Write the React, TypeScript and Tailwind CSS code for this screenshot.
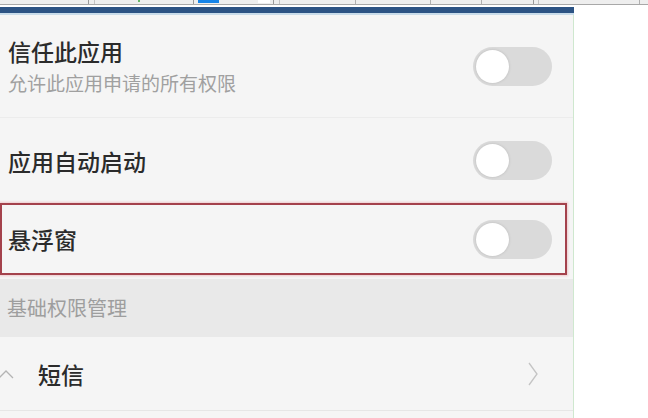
import React from "react";

const font = { fontFamily: '"Noto Sans CJK SC", "Noto Sans", sans-serif' };

function Toggle() {
  return (
    <div className="relative h-[39px] w-[79px] rounded-full bg-[#dadada]">
      <div className="absolute left-[3px] top-[3px] size-[33px] rounded-full bg-white shadow-[0_0_3px_rgba(0,0,0,0.15)]" />
    </div>
  );
}

export default function App() {
  return (
    <div className="h-[418px] w-[648px] overflow-hidden bg-white" style={font}>
      {/* cropped toolbar strip */}
      <div className="relative h-[5px] border-b border-[#a8a8a8] bg-[#eeeeee]">
        <div className="absolute left-[88px] top-0 h-[4px] w-px bg-[#9a9a9a]" />
        <div className="absolute left-[94px] top-0 h-[4px] w-px bg-[#c4c4c4]" />
        <div className="absolute left-[138px] top-0 size-[2px] rounded-full bg-[#3aa63a]" />
        <div className="absolute left-[193px] top-0 h-[4px] w-px bg-[#9a9a9a]" />
        <div className="absolute left-[198px] top-0 h-[3px] w-[21px] bg-[#1684e8]" />
        <div className="absolute left-[258px] top-0 h-[3px] w-[12px] bg-white" />
        <div className="absolute left-[273px] top-0 h-[4px] w-px bg-[#9a9a9a]" />
        <div className="absolute left-[279px] top-0 h-[4px] w-px bg-[#c4c4c4]" />
        <div className="absolute left-[355px] top-0 h-[4px] w-px bg-[#b0b0b0]" />
        <div className="absolute left-[430px] top-0 h-[4px] w-px bg-[#b0b0b0]" />
        <div className="absolute left-[481px] top-0 h-[4px] w-px bg-[#b0b0b0]" />
        <div className="absolute left-[533px] top-0 h-[4px] w-px bg-[#9a9a9a]" />
        <div className="absolute left-[538px] top-0 h-[4px] w-px bg-[#c4c4c4]" />
        <div className="absolute left-[639px] top-0 h-[4px] w-px bg-[#b0b0b0]" />
      </div>

      <div className="flex w-[574px] flex-col">
        <div className="mt-[2px] h-[6px] bg-[#2c5384]" />
        <div className="h-[2px] bg-[#c9dcea]" />

        <div className="flex flex-col border-r border-[#cfe8cf] bg-[#f5f5f5]">
          {/* trust app */}
          <div className="flex h-[103px] items-center justify-between border-b border-[#ececec] pl-[8px] pr-[21px]">
            <div className="flex flex-col pb-[1px]">
              <span className="text-[23px] font-medium leading-[30px] text-[#2b2b2b]">信任此应用</span>
              <span className="mt-[5px] text-[19px] leading-[24px] text-[#a0a0a0]">允许此应用申请的所有权限</span>
            </div>
            <Toggle />
          </div>

          {/* auto start */}
          <div className="flex h-[85px] items-center justify-between pl-[8px] pr-[21px]">
            <span className="text-[23px] font-medium leading-[30px] text-[#2b2b2b]">应用自动启动</span>
            <Toggle />
          </div>

          {/* floating window, highlighted */}
          <div className="mr-[6px] flex h-[72px] items-center justify-between border-[2px] border-[#a4424c] pl-[6px] pr-[13px] shadow-[0_0_2px_1px_rgba(230,120,130,0.35)]">
            <span className="text-[23px] font-medium leading-[30px] text-[#2b2b2b]">悬浮窗</span>
            <Toggle />
          </div>

          {/* section header */}
          <div className="mt-[4px] flex h-[58px] items-center bg-[#e9e9e9] pl-[7px]">
            <span className="text-[20px] leading-[26px] text-[#9e9e9e]">基础权限管理</span>
          </div>

          {/* sms */}
          <div className="flex h-[74px] items-center justify-between border-b border-[#e6e6e6] pr-[34px]">
            <div className="flex items-center">
              <svg width="18" height="12" viewBox="0 0 18 12" className="ml-[-2px]">
                <path d="M1 10 L8 3 L15 10" fill="none" stroke="#b4b4b4" strokeWidth="1.3" />
              </svg>
              <span className="ml-[22px] text-[23px] font-medium leading-[30px] text-[#2b2b2b]">短信</span>
            </div>
            <svg width="12" height="26" viewBox="0 0 12 26">
              <path d="M2 2 L10 13 L2 24" fill="none" stroke="#c4c4c4" strokeWidth="1.3" />
            </svg>
          </div>
          <div className="h-[20px]" />
        </div>
      </div>
    </div>
  );
}
